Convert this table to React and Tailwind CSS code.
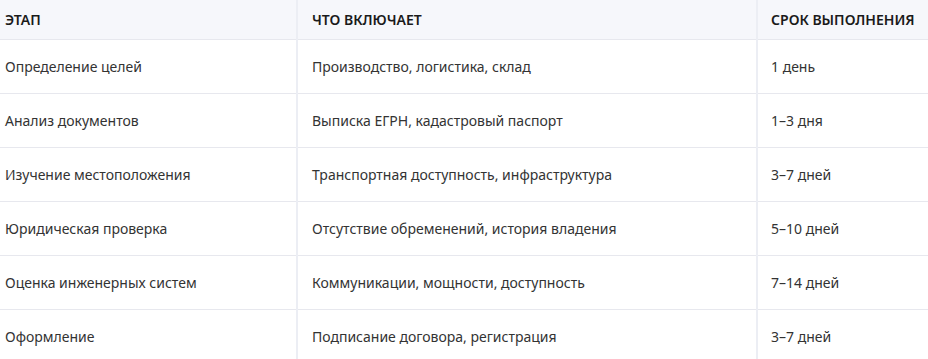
import React from 'react';

const rows = [
  { stage: 'Определение целей', includes: 'Производство, логистика, склад', term: '1 день' },
  { stage: 'Анализ документов', includes: 'Выписка ЕГРН, кадастровый паспорт', term: '1–3 дня' },
  { stage: 'Изучение местоположения', includes: 'Транспортная доступность, инфраструктура', term: '3–7 дней' },
  { stage: 'Юридическая проверка', includes: 'Отсутствие обременений, история владения', term: '5–10 дней' },
  { stage: 'Оценка инженерных систем', includes: 'Коммуникации, мощности, доступность', term: '7–14 дней' },
  { stage: 'Оформление', includes: 'Подписание договора, регистрация', term: '3–7 дней' },
];

const App = () => {
  return (
    <div className="w-[928px] h-[359px] overflow-hidden bg-white font-['Noto_Sans',sans-serif]">
      <table className="w-[937px] -ml-[9px] border-collapse text-left">
        <thead>
          <tr className="h-[39px] bg-[#f6f7fb] border-b border-[#e7e8ee]">
            <th className="w-[306px] pl-[14px] text-[14px] font-semibold uppercase text-[#1a1a1a] border-r-2 border-[#eceef4]">Этап</th>
            <th className="w-[460px] pl-[14px] text-[14px] font-semibold uppercase text-[#1a1a1a] border-r-2 border-[#eceef4]">Что включает</th>
            <th className="pl-[13px] text-[14px] font-semibold uppercase text-[#1a1a1a]">Срок выполнения</th>
          </tr>
        </thead>
        <tbody>
          {rows.map((row) => (
            <tr key={row.stage} className="h-[54px] border-b border-[#e7e8ee]">
              <td className="pl-[14px] text-[14px] text-[#333] border-r-2 border-[#eceef4]">{row.stage}</td>
              <td className="pl-[14px] text-[14px] text-[#333] border-r-2 border-[#eceef4]">{row.includes}</td>
              <td className="pl-[13px] text-[14px] text-[#333]">{row.term}</td>
            </tr>
          ))}
        </tbody>
      </table>
    </div>
  );
};

export default App;
